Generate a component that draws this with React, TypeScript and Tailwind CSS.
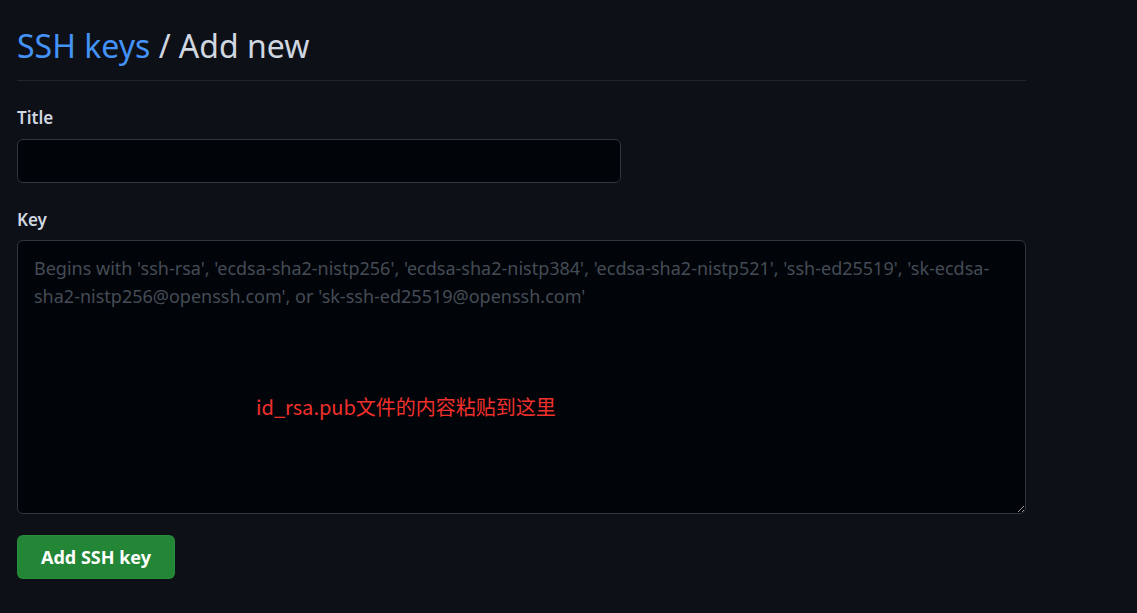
import React from 'react';

export default function App() {
  return (
    <div
      className="min-h-[613px] w-full bg-[#0d1117] text-[#d1d7e0]"
      style={{ fontFamily: '"Noto Sans", "Noto Sans CJK SC", sans-serif' }}
    >
      <div className="w-[1009px] pl-[17px] pt-[24px] box-content">
        {/* Header */}
        <div className="border-b border-[#21262d] pb-[12px]">
          <h1 className="text-[32px] leading-[44px] font-normal">
            <span className="text-[#4493f8]">SSH keys</span>
            <span> / Add new</span>
          </h1>
        </div>

        <form className="pt-[25px]" onSubmit={(e) => e.preventDefault()}>
          <label className="block text-[17px] font-semibold leading-[24px] mb-[9px]">Title</label>
          <input
            type="text"
            className="block w-[604px] h-[44px] rounded-[6px] border border-[#30363d] bg-[#010409] px-4 text-base outline-none"
          />

          <label className="block text-[17px] font-semibold leading-[24px] mt-[25px] mb-[8px]">Key</label>
          <div className="relative">
            <textarea
              placeholder="Begins with 'ssh-rsa', 'ecdsa-sha2-nistp256', 'ecdsa-sha2-nistp384', 'ecdsa-sha2-nistp521', 'ssh-ed25519', 'sk-ecdsa-sha2-nistp256@openssh.com', or 'sk-ssh-ed25519@openssh.com'"
              className="block w-[1009px] h-[274px] resize-y rounded-[6px] border border-[#30363d] bg-[#010409] px-4 pt-[13px] text-[18px] leading-[28px] text-[#d1d7e0] placeholder:text-[#454c56] outline-none"
            />
            <span
              className="absolute left-[239px] top-[153px] text-[20px] leading-[28px] text-[#f0302c] pointer-events-none"
              style={{ fontFamily: '"Noto Sans CJK SC", "Noto Sans", sans-serif' }}
            >
              id_rsa.pub文件的内容粘贴到这里
            </span>
          </div>

          <button
            type="submit"
            className="mt-[21px] h-[44px] w-[158px] rounded-[6px] border border-[#2ea043]/30 bg-[#238636] text-[18px] font-bold text-white"
          >
            Add SSH key
          </button>
        </form>
      </div>
    </div>
  );
}
